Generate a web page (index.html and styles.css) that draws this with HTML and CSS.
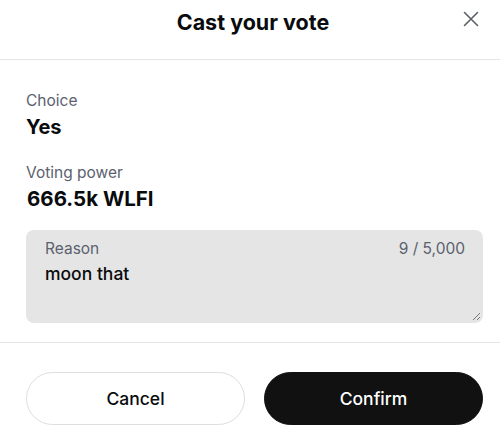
FILE: index.html
```html
<!DOCTYPE html>
<html>
<head>
<meta charset="utf-8">
<link rel="stylesheet" href="styles.css">
</head>
<body>
<div class="modal">
  <header class="head">
    <h1 class="title">Cast your vote</h1>
    <button class="close" aria-label="Close">
      <svg width="16" height="16" viewBox="0 0 16 16"><path d="M1.5 1.5L14.5 14.5M14.5 1.5L1.5 14.5" stroke="#5b5f66" stroke-width="1.6" stroke-linecap="round"/></svg>
    </button>
  </header>
  <section class="body">
    <div class="field">
      <div class="label">Choice</div>
      <div class="value">Yes</div>
    </div>
    <div class="field">
      <div class="label">Voting power</div>
      <div class="value big">666.5k WLFI</div>
    </div>
    <div class="reason">
      <div class="reason-top">
        <span class="label">Reason</span>
        <span class="label">9 / 5,000</span>
      </div>
      <div class="reason-text">moon that</div>
      <svg class="grip" width="10" height="10" viewBox="0 0 10 10"><path d="M9 2L2 9M9 6L6 9" stroke="#777" stroke-width="1"/></svg>
    </div>
  </section>
  <footer class="foot">
    <button class="btn cancel">Cancel</button>
    <button class="btn confirm">Confirm</button>
  </footer>
</div>
</body>
</html>
```
FILE: styles.css
```css
* { box-sizing: border-box; }
body {
  margin: 0;
  background: #fff;
  font-family: Inter, "Noto Sans", sans-serif;
  color: #0a0b0d;
}
.modal { width: 500px; }
.head {
  position: relative;
  height: 60px;
  border-bottom: 1px solid #e6e6e6;
  display: flex;
  justify-content: center;
}
.title {
  margin: 0;
  padding-top: 8px;
  padding-left: 6px;
  font-size: 21.5px;
  font-weight: 700;
  line-height: 28px;
}
.close {
  position: absolute;
  right: 20px;
  top: 10px;
  border: 0;
  background: none;
  padding: 0;
  width: 18px;
  height: 18px;
  display: flex;
  align-items: center;
  justify-content: center;
}
.body {
  padding: 29px 17px 19px 26px;
  border-bottom: 1px solid #e6e6e6;
}
.field { margin-bottom: 22px; }
.field + .field { margin-bottom: 19px; }
.label {
  font-size: 15.5px;
  color: #5b616e;
  line-height: 24px;
}
.value {
  font-size: 20px;
  font-weight: 700;
  line-height: 24px;
  margin-top: 2px;
}
.value.big { font-size: 20.5px; margin-left: 1px; }
.reason {
  position: relative;
  background: #e5e5e5;
  border-radius: 8px;
  height: 93px;
  padding: 7px 18px 0 19px;
}
.reason-top {
  display: flex;
  justify-content: space-between;
}
.reason-text {
  font-size: 17.5px;
  font-weight: 500;
  line-height: 24px;
  margin-top: 1px;
}
.grip { position: absolute; right: 2px; bottom: 2px; }
.foot {
  display: flex;
  gap: 19px;
  padding: 29px 17px 0 26px;
}
.btn {
  flex: 1;
  height: 53px;
  border-radius: 27px;
  font-family: Inter, "Noto Sans", sans-serif;
  font-size: 17.5px;
  font-weight: 500;
}
.cancel {
  background: #fff;
  border: 1px solid #dedede;
  color: #0a0b0d;
}
.confirm {
  background: #111;
  border: 1px solid #111;
  color: #fff;
}
```
